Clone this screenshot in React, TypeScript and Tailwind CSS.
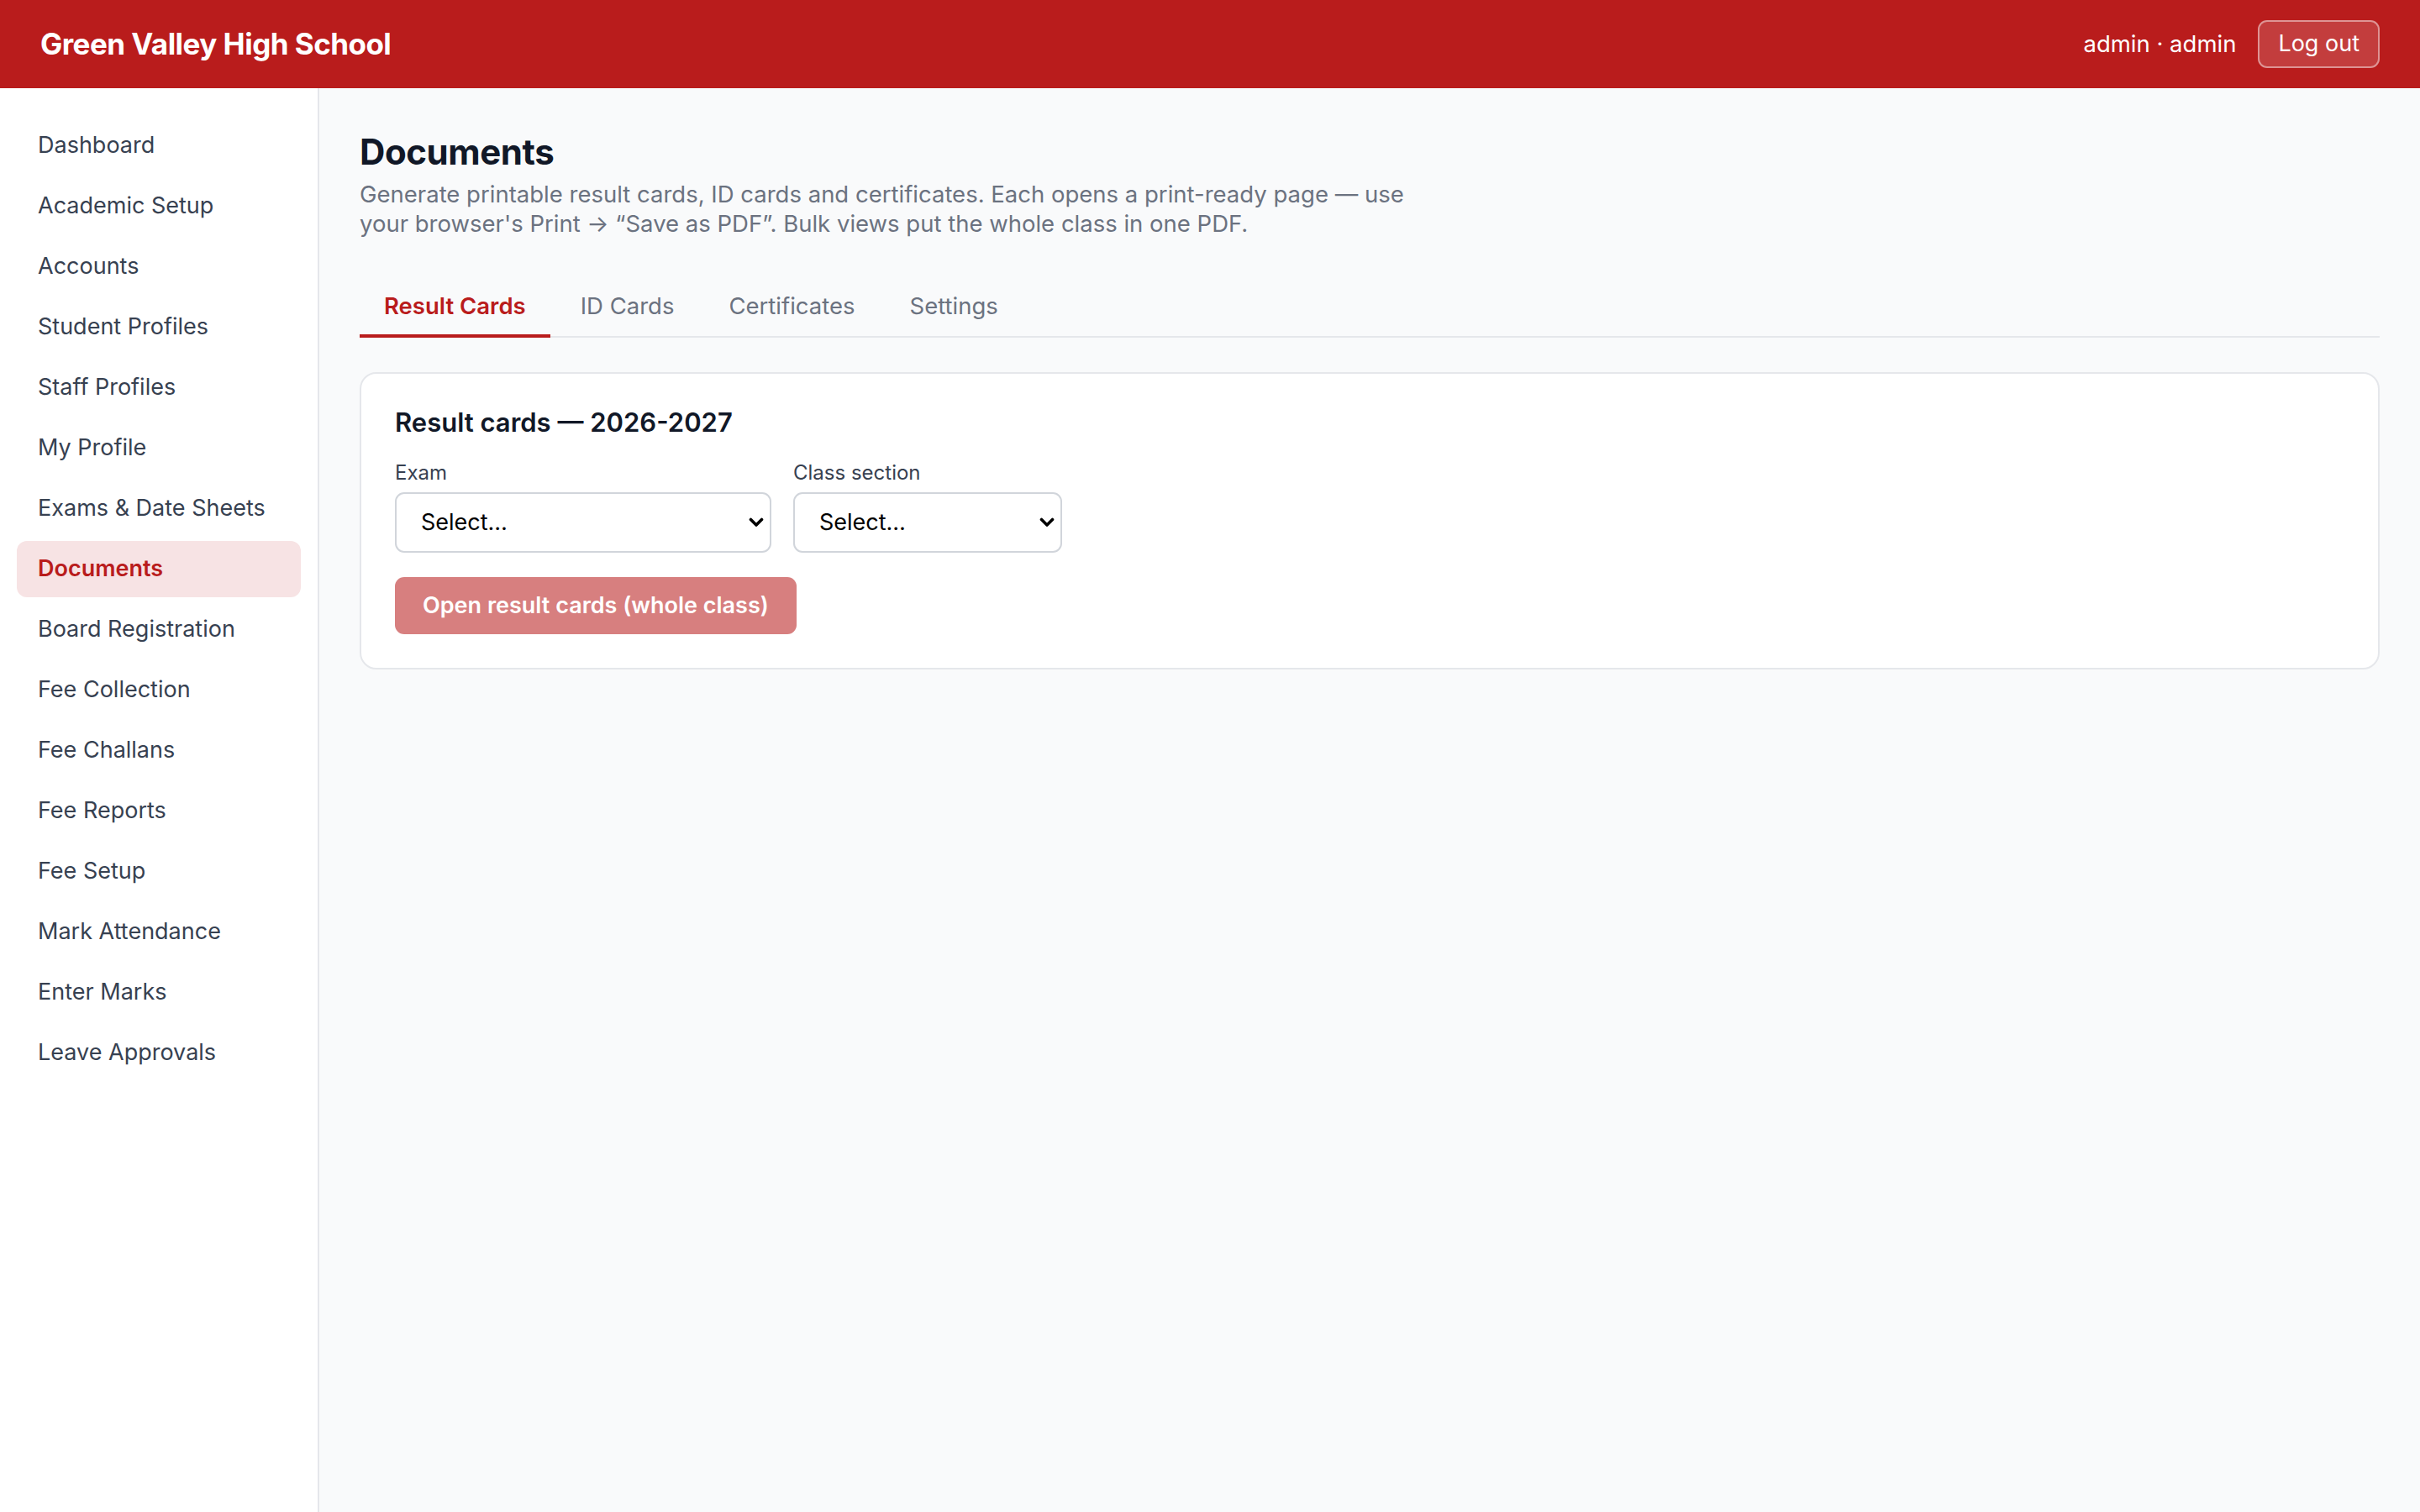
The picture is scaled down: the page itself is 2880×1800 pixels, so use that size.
import React from 'react';

const navItems: string[] = [
  'Dashboard',
  'Academic Setup',
  'Accounts',
  'Student Profiles',
  'Staff Profiles',
  'My Profile',
  'Exams & Date Sheets',
  'Documents',
  'Board Registration',
  'Fee Collection',
  'Fee Challans',
  'Fee Reports',
  'Fee Setup',
  'Mark Attendance',
  'Enter Marks',
  'Leave Approvals',
];

const tabs: string[] = ['Result Cards', 'ID Cards', 'Certificates', 'Settings'];

const Chevron: React.FC = () => (
  <svg
    className="pointer-events-none absolute right-[9px] top-1/2 -translate-y-1/2"
    width="18"
    height="12"
    viewBox="0 0 18 12"
    fill="none"
  >
    <path d="M2.5 2.5 L9 9 L15.5 2.5" stroke="#000" strokeWidth="3.6" strokeLinecap="round" strokeLinejoin="round" />
  </svg>
);

interface FieldProps {
  label: string;
  width: string;
}

const SelectField: React.FC<FieldProps> = ({ label, width }) => (
  <div className="flex flex-col">
    <label className="mb-[7px] text-[24px] leading-[32px] text-[#374151]">{label}</label>
    <div className={`relative ${width}`}>
      <select className="h-[72px] w-full appearance-none rounded-[11px] border-2 border-[#d1d5db] bg-white pl-[29px] pr-[40px] text-[27px] text-black outline-none">
        <option>Select…</option>
      </select>
      <Chevron />
    </div>
  </div>
);

const App: React.FC = () => {
  return (
    <div className="flex min-h-screen flex-col font-[Inter,sans-serif]">
      <header className="flex h-[105px] shrink-0 items-center justify-between bg-[#b91c1c] px-[48px]">
        <h1 className="text-[35px] font-bold tracking-[-0.015em] text-white">Green Valley High School</h1>
        <div className="flex items-center gap-[26px]">
          <span className="text-[27.5px] text-white">admin · admin</span>
          <button className="h-[57px] rounded-[11px] border-2 border-white/45 bg-white/15 px-[22px] text-[27px] text-white">
            Log out
          </button>
        </div>
      </header>

      <div className="flex flex-1">
        <aside className="w-[380px] shrink-0 border-r-2 border-[#e5e7eb] bg-white px-[20px] pt-[35px]">
          <nav className="flex flex-col gap-[5px]">
            {navItems.map((item) => {
              const active = item === 'Documents';
              return (
                <a
                  key={item}
                  className={
                    active
                      ? 'flex h-[67px] items-center rounded-[12px] bg-[#f7e3e4] pl-[25px] text-[27px] font-semibold text-[#b91c1c]'
                      : 'flex h-[67px] items-center rounded-[12px] pl-[25px] text-[27px] text-[#374151]'
                  }
                >
                  {item}
                </a>
              );
            })}
          </nav>
        </aside>

        <main className="flex-1 bg-[#f9fafb] px-[48px] pt-[51px]">
          <h2 className="text-[42px] font-bold leading-[50px] tracking-[-0.01em] text-[#111827]">Documents</h2>
          <p className="mt-[8px] max-w-[1270px] text-[27.5px] leading-[35px] text-[#6b7280]">
            Generate printable result cards, ID cards and certificates. Each opens a print-ready page — use your
            browser's Print → “Save as PDF”. Bulk views put the whole class in one PDF.
          </p>

          <div className="mt-[46px] flex gap-[7px] border-b-2 border-[#e5e7eb]">
            {tabs.map((tab, i) => (
              <button
                key={tab}
                className={
                  i === 0
                    ? '-mb-[2px] border-b-4 border-[#b91c1c] px-[29px] py-[14px] text-[27.5px] font-semibold leading-[40px] text-[#b91c1c]'
                    : '-mb-[2px] border-b-4 border-transparent px-[29px] py-[14px] text-[27.5px] leading-[40px] text-[#6b7280]'
                }
              >
                {tab}
              </button>
            ))}
          </div>

          <section className="mt-[41px] rounded-[20px] border-2 border-[#e5e7eb] bg-white px-[40px] pb-[40px] pt-[38px]">
            <h3 className="text-[31px] font-semibold leading-[40px] text-[#111827]">Result cards — 2026-2027</h3>
            <div className="mt-[24px] flex gap-[26px]">
              <SelectField label="Exam" width="w-[448px]" />
              <SelectField label="Class section" width="w-[320px]" />
            </div>
            <button className="mt-[29px] h-[68px] rounded-[11px] bg-[#d77f7f] px-[33px] text-[27px] font-semibold text-white">
              Open result cards (whole class)
            </button>
          </section>
        </main>
      </div>
    </div>
  );
};

export default App;
